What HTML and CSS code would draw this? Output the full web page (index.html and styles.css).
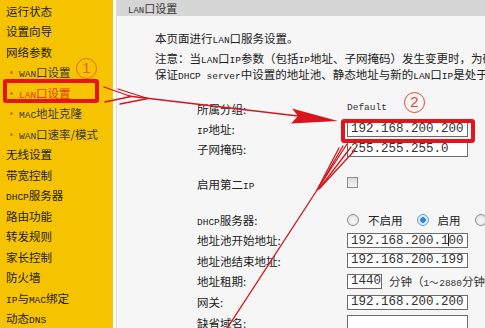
FILE: index.html
```html
<!DOCTYPE html>
<html lang="zh-CN">
<head>
<meta charset="utf-8">
<title>LAN口设置</title>
<link rel="stylesheet" href="styles.css">
</head>
<body>
<div class="page">
  <nav class="menu">
    <div class="item">运行状态</div>
    <div class="item">设置向导</div>
    <div class="item">网络参数</div>
    <div class="item sub"><span class="en">WAN</span>口设置</div>
    <div class="item sub active"><span class="en">LAN</span>口设置</div>
    <div class="item sub"><span class="en">MAC</span>地址克隆</div>
    <div class="item sub"><span class="en">WAN</span>口速率/模式</div>
    <div class="item">无线设置</div>
    <div class="item">带宽控制</div>
    <div class="item"><span class="en">DHCP</span>服务器</div>
    <div class="item">路由功能</div>
    <div class="item">转发规则</div>
    <div class="item">家长控制</div>
    <div class="item">防火墙</div>
    <div class="item"><span class="en">IP</span>与<span class="en">MAC</span>绑定</div>
    <div class="item">动态<span class="en">DNS</span></div>
  </nav>

  <main class="panel">
    <div class="title"><span class="en">LAN</span>口设置</div>
    <div class="intro">
      <p>本页面进行<span class="en">LAN</span>口服务设置。</p>
      <p class="note">注意：当<span class="en">LAN</span>口<span class="en">IP</span>参数（包括<span class="en">IP</span>地址、子网掩码）发生变更时，为确保</p>
      <p>保证<span class="en">DHCP server</span>中设置的地址池、静态地址与新的<span class="en">LAN</span>口<span class="en">IP</span>是处于同一网段</p>
    </div>
    <div class="form">
      <div class="row"><span class="label">所属分组:</span><span class="plain">Default</span></div>
      <div class="row"><span class="label"><span class="en">IP</span>地址:</span><span class="field">192.168.200.200</span></div>
      <div class="row"><span class="label">子网掩码:</span><span class="field">255.255.255.0</span></div>
      <div class="spacer-a"></div>
      <div class="row"><span class="label">启用第二<span class="en">IP</span></span><span class="check"></span></div>
      <div class="spacer-b"></div>
      <div class="row">
        <span class="label"><span class="en">DHCP</span>服务器:</span>
        <span class="radio"></span><span class="opt">不启用</span>
        <span class="radio on"></span><span class="opt">启用</span>
        <span class="radio"></span>
      </div>
      <div class="row wide"><span class="label">地址池开始地址:</span><span class="field">192.168.200.1<span class="caret"></span>00</span></div>
      <div class="row wide"><span class="label">地址池结束地址:</span><span class="field">192.168.200.199</span></div>
      <div class="row wide"><span class="label">地址租期:</span><span class="field short">1440</span><span class="unit">分钟（<span class="en">1～2880</span>分钟）</span></div>
      <div class="row wide"><span class="label">网关:</span><span class="field">192.168.200.200</span></div>
      <div class="row wide"><span class="label">缺省域名:</span><span class="field"></span></div>
    </div>
  </main>

  <div class="mark box-lan"></div>
  <div class="mark box-ip"></div>
  <div class="mark num num-1">1</div>
  <div class="mark num num-2">2</div>

  <svg class="arrows" width="485" height="328" viewBox="0 0 485 328">
    <g class="shaft">
      <path d="M128 96 L298 116"/>
      <path d="M104 87 L131 96.5 L105 102"/>
      <path d="M118 89 L148 98.5 L120 104"/>
      <path d="M347 144 L226 330"/>
      <path d="M339 148 L317 190"/>
      <path d="M343 146 L318 189"/>
      <path d="M351 147 L319 189"/>
      <path d="M355 150 L320 188"/>
    </g>
    <polygon class="head" points="338,121 292,108.5 298,116 291,123.5"/>
  </svg>
</div>
</body>
</html>
```

FILE: styles.css
```css
html, body {
  margin: 0;
  padding: 0;
}

body {
  width: 485px;
  height: 328px;
  overflow: hidden;
  background: #fff;
  font-family: "Noto Sans CJK SC", "Noto Sans", sans-serif;
  font-size: 12px;
  color: #222;
}

.page {
  position: relative;
  display: flex;
  width: 485px;
  height: 328px;
  overflow: hidden;
}

.en {
  font-family: "Liberation Mono", monospace;
  font-size: 9.5px;
  line-height: 1;
}

/* ---------- sidebar ---------- */
.menu {
  flex: none;
  width: 113px;
  background: #f6c300;
  padding-top: 0.5px;
}

.item {
  position: relative;
  height: 20.5px;
  line-height: 20.5px;
  padding-left: 6px;
  font-size: 11.5px;
  color: #1c1c1c;
  white-space: nowrap;
}

.item.sub {
  padding-left: 19px;
  color: #3a3a3a;
}

.item.sub::before {
  content: "";
  position: absolute;
  left: 10px;
  top: 9px;
  width: 3px;
  height: 3px;
  border-radius: 50%;
  background: #d8702c;
}

.item.active {
  color: #e2381c;
}

/* ---------- content panel ---------- */
.panel {
  flex: 1;
  min-width: 0;
  margin-left: 3px;
  background: #f6f6f6;
  border-left: 1px solid #dedede;
  overflow: hidden;
  white-space: nowrap;
}

.title {
  height: 16px;
  line-height: 16px;
  padding-left: 11px;
  background: #d6d6d6;
  font-size: 11px;
  color: #333;
}

.title .en {
  font-size: 9px;
}

.intro {
  padding: 14px 0 0 38px;
  font-size: 11.5px;
  color: #222;
}

.intro p {
  height: 16px;
  margin: 0;
  line-height: 16px;
}

.intro .note {
  margin-top: 4px;
}

.form {
  margin: 17px 0 0 80px;
  font-size: 11.5px;
}

.row {
  display: flex;
  align-items: center;
  height: 20px;
  line-height: 16px;
}

.row.wide {
  height: 20.6px;
}

.label {
  flex: none;
  width: 150px;
}

.spacer-a {
  height: 15px;
}

.spacer-b {
  height: 16px;
}

.plain {
  font-family: "Liberation Mono", monospace;
  font-size: 9.5px;
  color: #333;
  margin-top: -3px;
}

.field {
  position: relative;
  box-sizing: border-box;
  width: 121px;
  height: 15px;
  padding-left: 3px;
  border: 1px solid #6c6c6c;
  background: #fff;
  font-family: "Liberation Mono", monospace;
  font-size: 12.5px;
  line-height: 13px;
  color: #333;
}

.field.short {
  width: 39px;
}

.caret {
  display: inline-block;
  width: 1px;
  height: 12px;
  margin: 0 -0.5px;
  vertical-align: -2px;
  background: #222;
}

.unit {
  margin-left: 7px;
  color: #333;
}

.check {
  box-sizing: border-box;
  width: 11px;
  height: 11px;
  margin-top: -4px;
  border: 1px solid #8c8c8c;
  background: linear-gradient(#dcdcdc, #f4f4f4);
}

.radio {
  box-sizing: border-box;
  flex: none;
  width: 12px;
  height: 12px;
  border: 1px solid #8e8e8e;
  border-radius: 50%;
  background: radial-gradient(circle at 50% 60%, #fafafa 0, #e4e4e4 70%, #d0d0d0 100%);
}

.radio.on {
  border-color: #6d9fc9;
  background: radial-gradient(circle, #2b84d4 0, #2b84d4 2.5px, #cfe6f7 3px, #eaf4fb 100%);
}

.opt {
  margin: 0 14px 0 9px;
  color: #222;
}

/* ---------- annotations ---------- */
.mark {
  position: absolute;
  box-sizing: border-box;
  pointer-events: none;
}

.box-lan {
  left: 3px;
  top: 79px;
  width: 96px;
  height: 24px;
  border: 4px solid #e4141c;
  border-radius: 3px;
}

.box-ip {
  left: 341px;
  top: 119px;
  width: 134px;
  height: 24px;
  border: 4px solid #e4141c;
  border-radius: 3px;
}

.num {
  width: 21px;
  height: 21px;
  border: 1.5px solid #e6652e;
  border-radius: 50%;
  font-family: "Liberation Sans", sans-serif;
  font-size: 15px;
  line-height: 18px;
  text-align: center;
  color: #e6652e;
}

.num-1 {
  left: 76px;
  top: 58px;
}

.num-2 {
  left: 404px;
  top: 92px;
  border-color: #e2482c;
  color: #e2482c;
}

.arrows {
  position: absolute;
  left: 0;
  top: 0;
  pointer-events: none;
}

.shaft path {
  fill: none;
  stroke: #d0161f;
  stroke-width: 1.3;
  stroke-linecap: round;
  stroke-linejoin: round;
}

.head {
  fill: #d8141d;
}
```
